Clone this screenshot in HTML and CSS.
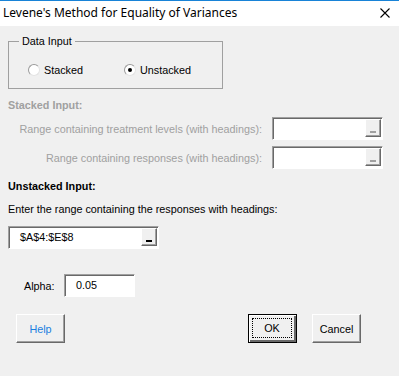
FILE: index.html
```html
<!DOCTYPE html>
<html lang="en">
<head>
    <meta charset="UTF-8">
    <title>Levene's Method for Equality of Variances</title>
    <link rel="stylesheet" href="styles.css">
</head>
<body>
    <div class="window">
        <div class="titlebar">
            <span class="title">Levene's Method for Equality of Variances</span>
            <svg class="close" width="10" height="10" viewBox="0 0 10 10">
                <path d="M0.5 0.5 L9.5 9.5 M9.5 0.5 L0.5 9.5" stroke="#000" stroke-width="1.1" fill="none"/>
            </svg>
        </div>
        <div class="content">
            <div class="frame">
                <span class="legend">Data Input</span>
                <div class="radios">
                    <label class="radio"><span class="dot"></span>Stacked</label>
                    <label class="radio checked"><span class="dot"></span>Unstacked</label>
                </div>
            </div>

            <div class="heading disabled">Stacked Input:</div>
            <div class="row first">
                <span class="row-label disabled">Range containing treatment levels (with headings):</span>
                <div class="refedit wide">
                    <span class="value"></span>
                    <span class="pick disabled-pick"><i></i></span>
                </div>
            </div>
            <div class="row second">
                <span class="row-label disabled">Range containing responses (with headings):</span>
                <div class="refedit wide">
                    <span class="value"></span>
                    <span class="pick disabled-pick"><i></i></span>
                </div>
            </div>

            <div class="heading unstacked">Unstacked Input:</div>
            <div class="prompt">Enter the range containing the responses with headings:</div>
            <div class="refedit long">
                <span class="value">$A$4:$E$8</span>
                <span class="pick"><i></i></span>
            </div>

            <div class="alpha">
                <span class="alpha-label">Alpha:</span>
                <div class="textbox">0.05</div>
            </div>

            <div class="buttons">
                <button class="btn help">Help</button>
                <div class="spacer"></div>
                <button class="btn default"><span class="focus">OK</span></button>
                <button class="btn">Cancel</button>
            </div>
        </div>
    </div>
</body>
</html>
```
FILE: styles.css
```css
* {
    box-sizing: border-box;
}
html, body {
    margin: 0;
    padding: 0;
    background: #f0f0f0;
}
.window {
    width: 399px;
    height: 376px;
    background: #f0f0f0;
    font: 10.8px/14px "Liberation Sans", Arial, sans-serif;
    color: #000;
}
.titlebar {
    height: 26px;
    background: #fff;
    border-top: 1px solid #1883d7;
    display: flex;
    align-items: center;
    padding: 0 9px 0 3px;
}
.title {
    flex: 1;
    font: 12px/16px "Noto Sans", "Open Sans", sans-serif;
    margin-top: -1px;
}
.close {
    display: block;
    margin-top: -1px;
}
.content {
    padding: 0 8px;
}

/* frame */
.frame {
    position: relative;
    margin-top: 15px;
    width: 215px;
    height: 48px;
    border: 1px solid #a0a0a0;
}
.legend {
    position: absolute;
    top: -8px;
    left: 10px;
    padding: 0 3px;
    background: #f0f0f0;
}
.radios {
    display: flex;
    padding: 21px 0 0 19px;
}
.radio {
    display: flex;
    align-items: center;
    height: 14px;
}
.radio:first-child {
    width: 96px;
}
.radio .dot {
    width: 12px;
    height: 12px;
    border-radius: 50%;
    background: #fff;
    border: 1px solid;
    border-color: #9a9a9a #e3e3e3 #e3e3e3 #9a9a9a;
    margin-right: 4px;
    display: flex;
    align-items: center;
    justify-content: center;
}
.radio.checked .dot::after {
    content: "";
    width: 4px;
    height: 4px;
    border-radius: 50%;
    background: #000;
}

/* stacked inputs */
.heading {
    font-weight: bold;
    margin-top: 9px;
}
.disabled {
    color: #a0a0a0;
}
.row {
    display: flex;
    align-items: center;
}
.row.first {
    margin-top: 5px;
}
.row.second {
    margin-top: 6px;
}
.row-label {
    width: 254px;
    text-align: right;
    margin-right: 10px;
}
.refedit {
    display: flex;
    height: 23px;
    background: #fff;
    border: 1px solid;
    border-color: #a0a0a0 #fff #fff #a0a0a0;
    box-shadow: inset 1px 1px 0 #696969;
    padding: 1px 1px 2px 1px;
}
.refedit.wide {
    width: 111px;
}
.refedit.long {
    width: 151px;
    margin-top: 10px;
}
.refedit .value {
    flex: 1;
    padding-left: 10px;
    line-height: 18px;
}
.pick {
    width: 16px;
    background: #f0f0f0;
    border: 1px solid;
    border-color: #fff #696969 #696969 #fff;
    box-shadow: inset -1px -1px 0 #a0a0a0;
    display: flex;
    align-items: flex-end;
    justify-content: center;
    padding-bottom: 3px;
}
.pick i {
    display: block;
    width: 6px;
    height: 2px;
    background: #000;
}
.disabled-pick i {
    background: #a0a0a0;
}

/* unstacked */
.heading.unstacked {
    margin-top: 10px;
}
.prompt {
    margin-top: 9px;
}

/* alpha */
.alpha {
    display: flex;
    align-items: center;
    margin-top: 25px;
}
.alpha-label {
    width: 56px;
    padding-left: 16px;
}
.textbox {
    width: 71px;
    height: 23px;
    background: #fff;
    border: 1px solid;
    border-color: #a0a0a0 #fff #fff #a0a0a0;
    box-shadow: inset 1px 1px 0 #696969;
    padding-left: 11px;
    line-height: 20px;
}

/* buttons */
.buttons {
    display: flex;
    margin-top: 17px;
    padding-left: 8px;
}
.spacer {
    width: 168px;
}
.btn {
    width: 49px;
    height: 29px;
    padding: 0;
    margin: 0 15px 0 0;
    font: inherit;
    color: #000;
    background: #f0f0f0;
    border: 1px solid;
    border-color: #fff #696969 #696969 #fff;
    box-shadow: inset -1px -1px 0 #a0a0a0;
}
.btn.help {
    color: #1a7fe0;
}
.btn.default {
    border: 1px solid #000;
    box-shadow: inset 1px 1px 0 #fff, inset -2px -2px 0 #696969;
    padding: 3px 4px 4px 3px;
}
.btn .focus {
    display: flex;
    align-items: center;
    justify-content: center;
    height: 100%;
    border: 1px dotted #000;
}
```
